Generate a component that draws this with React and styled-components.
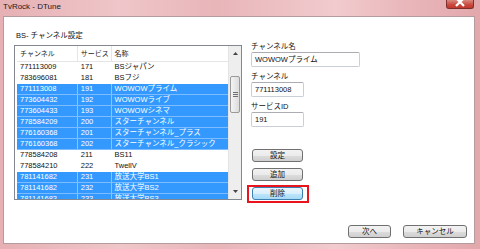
import React from 'react';
import styled, { createGlobalStyle } from 'styled-components';

const GlobalStyle = createGlobalStyle`
  html, body {
    margin: 0;
    padding: 0;
    background: #ffffff;
  }
  body {
    font-family: "Liberation Sans", "Noto Sans CJK JP", sans-serif;
  }
`;

const channels = [
  { ch: '771113009', sid: '171', name: 'BSジャパン', selected: false },
  { ch: '783696081', sid: '181', name: 'BSフジ', selected: false },
  { ch: '771113008', sid: '191', name: 'WOWOWプライム', selected: true },
  { ch: '773604432', sid: '192', name: 'WOWOWライブ', selected: true },
  { ch: '773604433', sid: '193', name: 'WOWOWシネマ', selected: true },
  { ch: '778584209', sid: '200', name: 'スターチャンネル', selected: true },
  { ch: '776160368', sid: '201', name: 'スターチャンネル_プラス', selected: true },
  { ch: '776160368', sid: '202', name: 'スターチャンネル_クラシック', selected: true },
  { ch: '778584208', sid: '211', name: 'BS11', selected: false },
  { ch: '778584210', sid: '222', name: 'TwellV', selected: false },
  { ch: '781141682', sid: '231', name: '放送大学BS1', selected: true },
  { ch: '781141682', sid: '232', name: '放送大学BS2', selected: true },
  { ch: '781141683', sid: '233', name: '放送大学BS3', selected: true },
];

export default function App() {
  return (
    <>
      <GlobalStyle />
      <Window>
        <TitleBar>
          <Title>TvRock - DTune</Title>
          <CloseButton>
            <svg width="10" height="10" viewBox="0 0 10 10">
              <path d="M1 1 L9 9 M9 1 L1 9" stroke="#ffffff" strokeWidth="2.2" />
            </svg>
          </CloseButton>
        </TitleBar>

        <Client>
          <TopSection>
            <LeftColumn>
              <GroupLabel>BS- チャンネル設定</GroupLabel>
              <ListBox>
                <ListContent>
                  <HeaderRow>
                    <HeaderCell $w={61}>チャンネル</HeaderCell>
                    <HeaderCell $w={34}>サービス</HeaderCell>
                    <HeaderCell $w={117}>名称</HeaderCell>
                  </HeaderRow>
                  {channels.map((c, i) => (
                    <Row key={i} $selected={c.selected}>
                      <Cell $w={61} $selected={c.selected}>{c.ch}</Cell>
                      <Cell $w={34} $selected={c.selected}>{c.sid}</Cell>
                      <Cell $w={117} $selected={c.selected}>{c.name}</Cell>
                    </Row>
                  ))}
                </ListContent>
                <ScrollBar>
                  <ArrowButton>
                    <svg width="5" height="3" viewBox="0 0 5 3">
                      <path d="M0 3 L2.5 0 L5 3 Z" fill="#444" />
                    </svg>
                  </ArrowButton>
                  <Track>
                    <Thumb>
                      <Grip />
                    </Thumb>
                  </Track>
                  <ArrowButton>
                    <svg width="5" height="3" viewBox="0 0 5 3">
                      <path d="M0 0 L5 0 L2.5 3 Z" fill="#444" />
                    </svg>
                  </ArrowButton>
                </ScrollBar>
              </ListBox>
            </LeftColumn>

            <RightColumn>
              <Field>
                <FieldLabel>チャンネル名</FieldLabel>
                <TextBox $w={109}>WOWOWプライム</TextBox>
              </Field>
              <Field>
                <FieldLabel>チャンネル</FieldLabel>
                <TextBox $w={53}>771113008</TextBox>
              </Field>
              <Field>
                <FieldLabel>サービスID</FieldLabel>
                <TextBox $w={53}>191</TextBox>
              </Field>

              <ActionButtons>
                <Button $w={51}>設定</Button>
                <Button $w={51}>追加</Button>
                <Highlight>
                  <Button $w={51} $hover>削除</Button>
                </Highlight>
              </ActionButtons>
            </RightColumn>
          </TopSection>

          <BottomBar>
            <Button $w={43}>次へ</Button>
            <Button $w={64}>キャンセル</Button>
          </BottomBar>
        </Client>
      </Window>
    </>
  );
}

const Window = styled.div`
  width: 480px;
  height: 249px;
  display: flex;
  flex-direction: column;
  background: linear-gradient(
    to right,
    #e6b0b4 0%,
    #efc6c9 25%,
    #e8b5b9 45%,
    #f1cbce 70%,
    #e9b6ba 85%,
    #e2a8ac 100%
  );
  overflow: hidden;
`;

const TitleBar = styled.div`
  height: 16px;
  display: flex;
  align-items: flex-start;
  justify-content: space-between;
  padding-left: 3px;
  padding-right: 6px;
`;

const Title = styled.span`
  font-size: 8px;
  line-height: 10px;
  margin-top: 2px;
  color: #1a1a1a;
`;

const CloseButton = styled.div`
  width: 28px;
  height: 9px;
  display: flex;
  align-items: flex-end;
  justify-content: center;
  overflow: hidden;
  background: linear-gradient(to bottom, #d98a7f, #c9483d 60%, #c0392f);
  border: 1px solid #7f2f2a;
  border-top: none;
  border-radius: 0 0 3px 3px;
  box-sizing: border-box;

  svg {
    margin-bottom: 1px;
  }
`;

const Client = styled.div`
  flex: 1;
  margin: 0 5px 5px 3px;
  background: #ffffff;
  border: 1px solid #b39b9e;
  display: flex;
  flex-direction: column;
  box-sizing: border-box;
`;

const TopSection = styled.div`
  display: flex;
  padding: 13px 0 0 10px;
`;

const LeftColumn = styled.div`
  display: flex;
  flex-direction: column;
  width: 228px;
`;

const GroupLabel = styled.div`
  font-size: 7.5px;
  line-height: 12px;
  color: #111;
  padding-left: 2px;
  margin-bottom: 3px;
`;

const ListBox = styled.div`
  height: 155px;
  border: 1px solid #828790;
  box-sizing: border-box;
  display: flex;
  background: #ffffff;
`;

const ListContent = styled.div`
  flex: 1;
  padding-left: 2px;
  overflow: hidden;
`;

const HeaderRow = styled.div`
  display: flex;
  height: 16px;
  border-bottom: 1px solid #e5e5e5;
  box-sizing: border-box;
`;

const HeaderCell = styled.div`
  width: ${({ $w }) => $w}px;
  padding-left: 3px;
  box-sizing: border-box;
  font-size: 7px;
  line-height: 15px;
  color: #222;
  border-right: 1px solid #e6e6e6;
  white-space: nowrap;
  overflow: hidden;

  &:last-child {
    border-right: none;
  }
`;

const Row = styled.div`
  display: flex;
  height: 11px;
  background: ${({ $selected }) => ($selected ? '#3399ff' : '#ffffff')};
  border-bottom: 1px solid ${({ $selected }) => ($selected ? '#7dbcff' : '#ffffff')};
  box-sizing: border-box;
`;

const Cell = styled.div`
  width: ${({ $w }) => $w}px;
  padding-left: 3px;
  box-sizing: border-box;
  font-size: 7.5px;
  line-height: 10px;
  color: ${({ $selected }) => ($selected ? '#ffffff' : '#111111')};
  border-right: 1px solid ${({ $selected }) => ($selected ? '#8cc4ff' : '#ffffff')};
  white-space: nowrap;
  overflow: hidden;

  &:last-child {
    border-right: none;
  }
`;

const ScrollBar = styled.div`
  width: 12px;
  display: flex;
  flex-direction: column;
  background: #eeeeee;
  border-left: 1px solid #e4e4e4;
`;

const ArrowButton = styled.div`
  height: 15px;
  display: flex;
  align-items: center;
  justify-content: center;
`;

const Track = styled.div`
  flex: 1;
  padding-top: 15px;
`;

const Thumb = styled.div`
  height: 37px;
  margin: 0 1px;
  border: 1px solid #9a9a9a;
  border-radius: 2px;
  background: linear-gradient(to right, #f4f4f4, #dcdcdc);
  display: flex;
  align-items: center;
  justify-content: center;
  box-sizing: border-box;
`;

const Grip = styled.div`
  width: 5px;
  height: 5px;
  background: repeating-linear-gradient(
    to bottom,
    #6f6f6f 0,
    #6f6f6f 1px,
    transparent 1px,
    transparent 2px
  );
`;

const RightColumn = styled.div`
  display: flex;
  flex-direction: column;
  margin-left: 9px;
  padding-top: 12px;
`;

const Field = styled.div`
  display: flex;
  flex-direction: column;
  margin-bottom: 5px;
`;

const FieldLabel = styled.div`
  font-size: 7.5px;
  line-height: 10px;
  color: #111;
`;

const TextBox = styled.div`
  width: ${({ $w }) => $w}px;
  height: 15px;
  border: 1px solid #c9cfd6;
  border-top-color: #abadb3;
  border-radius: 2px;
  box-sizing: border-box;
  padding-left: 3px;
  font-size: 7.5px;
  line-height: 13px;
  color: #111;
  white-space: nowrap;
`;

const ActionButtons = styled.div`
  display: flex;
  flex-direction: column;
  align-items: flex-start;
  gap: 6px;
  margin-top: 17px;
  padding-left: 1px;
`;

const Button = styled.div`
  width: ${({ $w }) => $w}px;
  height: 13px;
  box-sizing: border-box;
  border: 1px solid ${({ $hover }) => ($hover ? '#3c7fb1' : '#707070')};
  border-radius: 3px;
  background: ${({ $hover }) =>
    $hover
      ? 'linear-gradient(to bottom, #eaf6fd 0%, #d9f0fc 50%, #bee6fd 51%, #a7d9f5 100%)'
      : 'linear-gradient(to bottom, #f2f2f2 0%, #ebebeb 50%, #dddddd 51%, #cfcfcf 100%)'};
  display: flex;
  align-items: center;
  justify-content: center;
  font-size: 7.5px;
  line-height: 11px;
  color: #111;
`;

const Highlight = styled.div`
  border: 2px solid #e8141e;
  padding: 0 4px 1px 3px;
  margin: -2px 0 0 -5px;
`;

const BottomBar = styled.div`
  margin-top: auto;
  display: flex;
  justify-content: flex-end;
  gap: 12px;
  padding: 0 7px 5px 0;
`;
